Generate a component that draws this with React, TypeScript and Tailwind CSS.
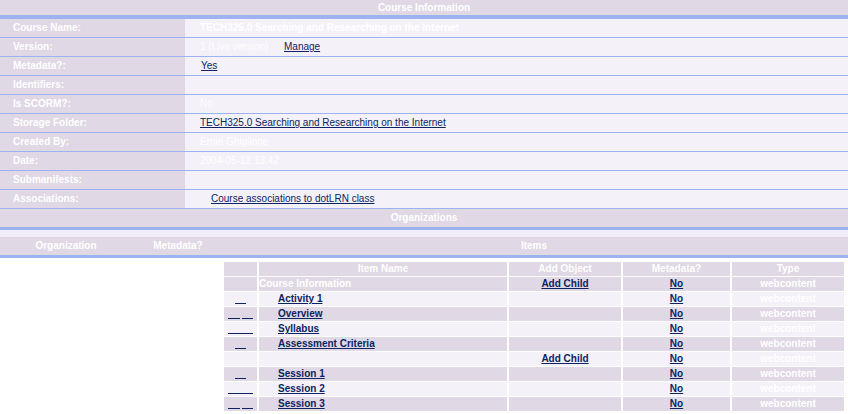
import React from 'react';

// colours picked from the (dithered) screenshot, averaged
const DARK = 'bg-[#e0d8e4]';
const LIGHT = 'bg-[#f4f1f8]';

interface InfoRow {
  label: string;
  value?: React.ReactNode;
}

const linkCls = 'text-[#0c2461] underline underline-offset-[1px]';

const infoRows: InfoRow[] = [
  { label: 'Course Name:', value: <span className="text-white font-bold">TECH325.0 Searching and Researching on the Internet</span> },
  {
    label: 'Version:',
    value: (
      <>
        <span className="text-white w-[84px] inline-block">1 (Live version)</span>
        <span className={linkCls}>Manage</span>
      </>
    ),
  },
  { label: 'Metadata?:', value: <span className={`${linkCls} ml-[1px]`}>Yes</span> },
  { label: 'Identifiers:', value: null },
  { label: 'Is SCORM?:', value: <span className="text-white">No</span> },
  { label: 'Storage Folder:', value: <span className={linkCls}>TECH325.0 Searching and Researching on the Internet</span> },
  { label: 'Created By:', value: <span className="text-white">Ernie Ghiglione</span> },
  { label: 'Date:', value: <span className="text-white">2004-05-12 13:42</span> },
  { label: 'Submanifests:', value: null },
  { label: 'Associations:', value: <span className={`${linkCls} ml-[11px]`}>Course associations to dotLRN class</span> },
];

type Arrows = 'one' | 'two' | 'pair' | null;

interface Item {
  name: string;
  link: boolean;
  arrows: Arrows;
  addChild: boolean;
  dark: boolean;
}

const items: Item[] = [
  { name: 'Course Information', link: false, arrows: null, addChild: true, dark: true },
  { name: 'Activity 1', link: true, arrows: 'one', addChild: false, dark: false },
  { name: 'Overview', link: true, arrows: 'pair', addChild: false, dark: true },
  { name: 'Syllabus', link: true, arrows: 'two', addChild: false, dark: false },
  { name: 'Assessment Criteria', link: true, arrows: 'one', addChild: false, dark: true },
  { name: '', link: false, arrows: null, addChild: true, dark: false },
  { name: 'Session 1', link: true, arrows: 'one', addChild: false, dark: true },
  { name: 'Session 2', link: true, arrows: 'two', addChild: false, dark: false },
  { name: 'Session 3', link: true, arrows: 'pair', addChild: false, dark: true },
];

const ArrowLinks: React.FC<{ kind: Arrows }> = ({ kind }) => {
  if (!kind) return null;
  const line = 'inline-block h-[12px] border-b border-[#0c2461]';
  if (kind === 'one') return <span className={`${line} w-[11px]`} />;
  if (kind === 'two') return <span className={`${line} w-[25px]`} />;
  return (
    <span className="flex gap-[2px]">
      <span className={`${line} w-[12px]`} />
      <span className={`${line} w-[11px]`} />
    </span>
  );
};

const App: React.FC = () => {
  return (
    <div className="w-[848px] h-[414px] overflow-hidden bg-white font-['Liberation_Sans',Arial,sans-serif] text-[10px] leading-none">
      {/* Course Information */}
      <div className={`h-[15px] ${DARK} flex items-center justify-center text-white font-bold`}>Course Information</div>
      <div className="h-[4px] bg-[#9db3ef]" />
      {infoRows.map((r) => (
        <div key={r.label} className="grid grid-cols-[185px_1fr] h-[19px] border-b border-[#9db3ef]">
          <div className={`${DARK} flex items-center pl-[13px] text-white font-bold`}>{r.label}</div>
          <div className={`${LIGHT} flex items-center pl-[15px] whitespace-nowrap`}>{r.value}</div>
        </div>
      ))}

      {/* Organizations */}
      <div className={`h-[18px] ${DARK} flex items-center justify-center text-white font-bold`}>Organizations</div>
      <div className="h-[3px] bg-[#9db3ef]" />
      <div className="h-[7px] bg-[#f1eef7]" />
      <div className={`h-[18px] ${DARK} grid grid-cols-[132px_92px_620px] text-white font-bold`}>
        <div className="flex items-center justify-center">Organization</div>
        <div className="flex items-center justify-center">Metadata?</div>
        <div className="flex items-center justify-center">Items</div>
      </div>
      <div className="h-[3px] bg-[#9db3ef]" />

      {/* Items */}
      <div className="pl-[224px] pt-[4px]">
        <div className="grid grid-cols-[33px_248px_112px_107px_112px] gap-x-[2px] gap-y-[1px] w-[620px]">
          {['', 'Item Name', 'Add Object', 'Metadata?', 'Type'].map((h, i) => (
            <div key={i} className={`h-[14px] ${DARK} flex items-center justify-center text-white font-bold`}>{h}</div>
          ))}
          {items.map((it, idx) => {
            const bg = it.dark ? DARK : LIGHT;
            return (
              <React.Fragment key={idx}>
                <div className={`h-[14px] ${bg} flex items-start justify-center`}>
                  <ArrowLinks kind={it.arrows} />
                </div>
                <div className={`h-[14px] ${bg} flex items-center font-bold`}>
                  {it.link ? (
                    <span className={`${linkCls} ml-[19px]`}>{it.name}</span>
                  ) : (
                    <span className="text-white">{it.name}</span>
                  )}
                </div>
                <div className={`h-[14px] ${bg} flex items-center justify-center font-bold`}>
                  {it.addChild && <span className={linkCls}>Add Child</span>}
                </div>
                <div className={`h-[14px] ${bg} flex items-center justify-center font-bold`}>
                  <span className={linkCls}>No</span>
                </div>
                <div className={`h-[14px] ${bg} flex items-center justify-center font-bold text-white`}>webcontent</div>
              </React.Fragment>
            );
          })}
        </div>
      </div>
    </div>
  );
};

export default App;
